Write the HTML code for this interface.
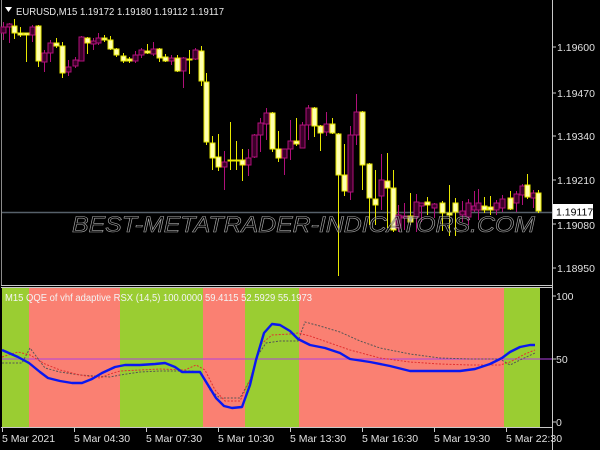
<!DOCTYPE html>
<html><head><meta charset="utf-8"><style>
html,body{margin:0;padding:0;background:#000;width:600px;height:450px;overflow:hidden}
svg{display:block}
text{font-family:"Liberation Sans",sans-serif;}
</style></head><body>
<svg width="600" height="450" viewBox="0 0 600 450" xmlns="http://www.w3.org/2000/svg">
<rect width="600" height="450" fill="#000"/>
<line x1="1.5" y1="0" x2="1.5" y2="285" stroke="#8a8a8a"/>
<line x1="552.5" y1="0" x2="552.5" y2="450" stroke="#c8c8c8"/>
<line x1="1" y1="285.5" x2="553" y2="285.5" stroke="#c8c8c8"/>
<line x1="2" y1="212.5" x2="552" y2="212.5" stroke="#56606a" stroke-width="1.5"/>
<g id="candles" stroke-width="1"></g>
<text x="72" y="232" font-size="22" font-style="italic" fill="#000" fill-opacity="0.3" stroke="#a8a8a8" stroke-width="0.6" textLength="463" lengthAdjust="spacingAndGlyphs" font-family="'DejaVu Sans',sans-serif">BEST-METATRADER-INDICATORS.COM</text>
<path d="M5,7 L12,7 L8.5,12 Z" fill="#fff"/>
<text x="16" y="15" font-size="10.5" fill="#e8e8e8" textLength="208" lengthAdjust="spacingAndGlyphs">EURUSD,M15  1.19172 1.19180 1.19112 1.19117</text>
<g font-size="10.5" fill="#e0e0e0">
<text x="557" y="51">1.19600</text>
<text x="557" y="97">1.19470</text>
<text x="557" y="140">1.19340</text>
<text x="557" y="184">1.19210</text>
<text x="557" y="229">1.19080</text>
<text x="557" y="272">1.18950</text>
</g>
<g stroke="#c8c8c8"><line x1="553" y1="47" x2="556" y2="47"/><line x1="553" y1="93" x2="556" y2="93"/><line x1="553" y1="136" x2="556" y2="136"/><line x1="553" y1="180" x2="556" y2="180"/><line x1="553" y1="224" x2="556" y2="224"/><line x1="553" y1="268" x2="556" y2="268"/></g>
<rect x="553" y="204" width="40" height="15" fill="#fff"/>
<text x="556" y="215.5" font-size="10.5" fill="#000">1.19117</text>

<line x1="1" y1="287.5" x2="553" y2="287.5" stroke="#c8c8c8"/>
<rect x="2" y="288" width="27" height="139" fill="#9acd32"/>
<rect x="29" y="288" width="91" height="139" fill="#fa8072"/>
<rect x="120" y="288" width="83" height="139" fill="#9acd32"/>
<rect x="203" y="288" width="42" height="139" fill="#fa8072"/>
<rect x="245" y="288" width="54" height="139" fill="#9acd32"/>
<rect x="299" y="288" width="205" height="139" fill="#fa8072"/>
<rect x="504" y="288" width="36" height="139" fill="#9acd32"/>
<line x1="2" y1="359" x2="552" y2="359" stroke="#b040e0" stroke-width="1"/>
<polyline fill="none" stroke="#555" stroke-width="1" stroke-dasharray="2,1.5" points="2,363 22,363 30,348 45,368 60,372 80,375 110,377 120,375 140,372 160,371 190,371 200,372 210,390 220,398 240,398 250,380 258,355 266,343 280,341 298,341 305,322 320,326 340,332 360,341 380,348 410,354 440,358 470,359 500,359 510,365 520,360 535,353"/>
<polyline fill="none" stroke="#e23030" stroke-width="1" stroke-dasharray="2,1.5" points="2,357 18,352 30,355 45,364 60,370 80,375 100,378 110,374 120,371 140,370 160,369 185,370 196,365 205,370 215,390 225,401 240,401 250,380 260,345 272,335 290,334 298,333 310,336 330,343 350,350 380,358 410,362 440,364 470,365 500,365 510,362 525,354 535,350"/>
<polyline fill="none" stroke="#0a18f0" stroke-width="2.4" stroke-linejoin="round" points="2,350 18,357 29,363 40,372 48,378 60,381 72,383 82,383 92,379 102,373 115,367 125,365 140,365 155,364 165,363 175,367 182,372 200,372 208,385 216,398 224,406 232,408 242,407 250,385 256,360 264,333 272,324 280,325 290,331 298,339 310,345 325,348 340,353 350,359 370,362 390,366 410,371 440,371 460,371 475,369 490,364 502,358 510,352 520,347 530,345 535,345"/>
<text x="5" y="301" font-size="10" fill="#f4f4f4" textLength="307" lengthAdjust="spacingAndGlyphs">M15 QQE of vhf adaptive RSX (14,5) 100.0000 59.4115 52.5929 55.1973</text>
<g font-size="10.5" fill="#e0e0e0">
<text x="556" y="300">100</text>
<text x="556" y="363">50</text>
<text x="556" y="426">0</text>
</g>
<g stroke="#c8c8c8"><line x1="553" y1="296" x2="556" y2="296"/><line x1="553" y1="359" x2="556" y2="359"/><line x1="553" y1="422" x2="556" y2="422"/></g>
<line x1="1" y1="427.5" x2="553" y2="427.5" stroke="#c8c8c8"/>
<g stroke="#c8c8c8"><line x1="2.5" y1="428" x2="2.5" y2="432"/><line x1="74.5" y1="428" x2="74.5" y2="432"/><line x1="146.5" y1="428" x2="146.5" y2="432"/><line x1="218.5" y1="428" x2="218.5" y2="432"/><line x1="290.5" y1="428" x2="290.5" y2="432"/><line x1="362.5" y1="428" x2="362.5" y2="432"/><line x1="434.5" y1="428" x2="434.5" y2="432"/><line x1="506.5" y1="428" x2="506.5" y2="432"/></g>
<g font-size="10.5" fill="#e0e0e0">
<text x="2" y="442">5 Mar 2021</text>
<text x="74" y="442">5 Mar 04:30</text>
<text x="146" y="442">5 Mar 07:30</text>
<text x="218" y="442">5 Mar 10:30</text>
<text x="290" y="442">5 Mar 13:30</text>
<text x="362" y="442">5 Mar 16:30</text>
<text x="434" y="442">5 Mar 19:30</text>
<text x="506" y="442">5 Mar 22:30</text>
</g>
</svg>
<script>
var C=[
[3,'m',22,40,27,33],[9,'m',23,43,24,27],[14,'y',19,39,26,33],[20,'y',27,37,33,35],[26,'y',33,62,33,35],[32,'m',25,42,27,35],[38,'y',25,67,26,61],[44,'m',50,72,53,62],[50,'m',40,62,43,53],[56,'y',38,48,43,46],[62,'y',42,78,46,73],[68,'m',60,76,67,72],[75,'m',57,68,60,66],[81,'m',36,61,37,61],[87,'y',37,54,38,43],[93,'m',38,50,41,44],[98,'m',33,45,38,43],[104,'y',35,42,38,40],[110,'y',36,50,40,49],[116,'y',48,57,49,55],[123,'y',53,63,56,61],[129,'y',57,63,59,61],[135,'m',51,63,55,61],[141,'m',48,58,50,55],[147,'y',44,54,51,53],[153,'m',42,56,49,54],[159,'y',48,62,49,58],[165,'y',54,62,57,61],[171,'m',55,65,58,61],[177,'y',55,72,58,71],[183,'m',57,88,58,71],[189,'y',50,74,59,60],[195,'m',48,60,50,59],[201,'y',46,86,51,81],
[206,'y',73,145,82,142],[212,'y',136,170,143,158],[218,'y',134,171,157,167],[224,'m',151,190,162,167],[230,'y',122,170,160,161],[236,'y',141,170,160,161],[242,'y',149,181,160,165],[248,'m',149,176,158,165],[254,'m',134,158,135,157],[260,'m',118,152,123,135],[266,'m',108,140,113,124],[272,'y',112,152,113,149],[278,'y',131,162,149,158],[284,'m',149,175,149,158],[290,'m',120,160,141,149],[296,'y',118,146,141,144],[302,'m',122,147,125,148],[308,'m',105,140,108,125],[314,'y',107,137,108,126],[320,'y',125,151,126,133],[326,'m',112,136,124,132],[332,'y',118,134,124,133],[338,'y',133,276,134,175],[344,'y',144,196,175,191],[350,'m',126,200,135,192],[356,'m',94,145,112,135],[362,'y',111,190,112,165],[369,'y',163,225,164,198],[375,'y',170,225,199,205],[381,'m',154,210,180,196],[387,'y',153,228,181,188],[393,'y',170,232,188,230],[398,'m',205,232,215,228],[404,'m',203,230,216,218],[410,'y',193,225,216,222],[416,'m',194,232,202,217],[421,'m',205,222,203,206],[427,'y',197,215,202,205],[434,'m',203,218,204,208],[442,'y',201,231,203,213],[449,'y',185,236,213,215],[455,'y',198,236,203,212],[462,'m',201,222,211,215],[468,'m',199,225,203,217],[474,'m',191,212,206,210],[478,'m',189,220,203,210],[484,'y',197,213,206,210],[490,'y',196,215,207,210],[496,'m',200,215,203,210],[502,'m',195,212,199,208],[510,'y',191,210,198,209],[516,'m',191,212,194,203],[522,'m',184,205,186,195],[527,'y',174,199,185,197],[533,'m',190,208,193,198],[538,'y',190,213,193,211]];
var g=document.getElementById('candles'),s='';
C.forEach(function(c){var col=c[1]=='y'?'#e8e800':'#b0107a',fill=c[1]=='y'?'#ffffb0':'#3a0028';
s+='<line x1="'+(c[0]+.5)+'" y1="'+c[2]+'" x2="'+(c[0]+.5)+'" y2="'+c[3]+'" stroke="'+col+'"/>';
var h=Math.max(1,c[5]-c[4]);s+='<rect x="'+(c[0]-2)+'" y="'+c[4]+'" width="5" height="'+h+'" fill="'+fill+'" stroke="'+col+'"/>';});
g.innerHTML=s;
</script>
</body></html>
